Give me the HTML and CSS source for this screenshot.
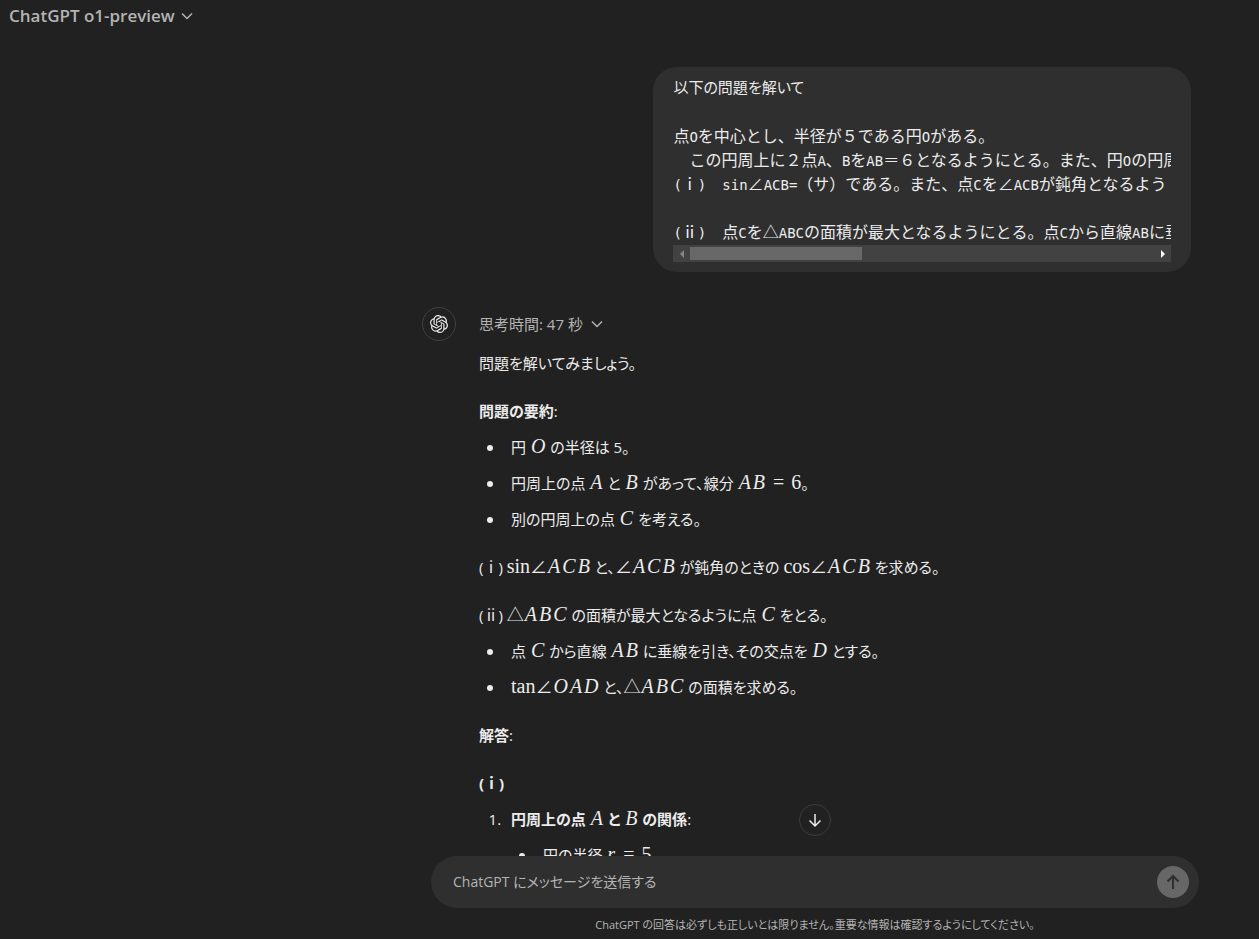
FILE: index.html
```
<!DOCTYPE html>
<html lang="ja">
<head>
    <meta charset="UTF-8">
    <meta name="viewport" content="width=device-width, initial-scale=1.0">
    <title>ChatGPT</title>
    <link rel="stylesheet" href="styles.css">
</head>
<body>

    <!-- Header -->
    <header class="header">
        <button class="model-btn" type="button">
            ChatGPT o1-preview
            <svg class="chevron" viewBox="0 0 12 12"><path d="M1 3.5l5 5 5-5"/></svg>
        </button>
    </header>

    <!-- Conversation -->
    <main class="thread">
        <div class="messages">

            <div class="bubble">
                <div class="bubble-scroll">
                    <p class="plain">以下の問題を解いて</p>
                    <p>&nbsp;</p>
                    <p>点<code>O</code>を中心とし、半径が５である円<code>O</code>がある。</p>
                    <p>　この円周上に２点<code>A</code>、<code>B</code>を<code>AB</code>＝６となるようにとる。また、円<code>O</code>の円周</p>
                    <p><code>(</code>ⅰ<code>)</code>　<code>sin</code>∠<code>ACB=</code>（サ）である。また、点<code>C</code>を∠<code>ACB</code>が鈍角となるよう</p>
                    <p>&nbsp;</p>
                    <p><code>(</code>ⅱ<code>)</code>　点<code>C</code>を△<code>ABC</code>の面積が最大となるようにとる。点<code>C</code>から直線<code>AB</code>に垂</p>
                </div>
                <div class="scrollbar">
                    <span class="arrow arrow-left"></span>
                    <span class="track"><span class="thumb"></span></span>
                    <span class="arrow arrow-right"></span>
                </div>
            </div>

            <div class="answer">
                <div class="avatar">
                    <svg viewBox="0 0 24 24"><path d="M22.2819 9.8211a5.9847 5.9847 0 0 0-.5157-4.9108 6.0462 6.0462 0 0 0-6.5098-2.9A6.0651 6.0651 0 0 0 4.9807 4.1818a5.9847 5.9847 0 0 0-3.9977 2.9 6.0462 6.0462 0 0 0 .7427 7.0966 5.98 5.98 0 0 0 .511 4.9107 6.051 6.051 0 0 0 6.5146 2.9001A5.9847 5.9847 0 0 0 13.2599 24a6.0557 6.0557 0 0 0 5.7718-4.2058 5.9894 5.9894 0 0 0 3.9977-2.9001 6.0557 6.0557 0 0 0-.7475-7.0729zm-9.022 12.6081a4.4755 4.4755 0 0 1-2.8764-1.0408l.1419-.0804 4.7783-2.7582a.7948.7948 0 0 0 .3927-.6813v-6.7369l2.02 1.1686a.071.071 0 0 1 .038.052v5.5826a4.504 4.504 0 0 1-4.4945 4.4944zm-9.6607-4.1254a4.4708 4.4708 0 0 1-.5346-3.0137l.142.0852 4.783 2.7582a.7712.7712 0 0 0 .7806 0l5.8428-3.3685v2.3324a.0804.0804 0 0 1-.0332.0615L9.74 19.9502a4.4992 4.4992 0 0 1-6.1408-1.6464zM2.3408 7.8956a4.485 4.485 0 0 1 2.3655-1.9728V11.6a.7664.7664 0 0 0 .3879.6765l5.8144 3.3543-2.0201 1.1685a.0757.0757 0 0 1-.071 0l-4.8303-2.7865A4.504 4.504 0 0 1 2.3408 7.872zm16.5963 3.8558L13.1038 8.364 15.1192 7.2a.0757.0757 0 0 1 .071 0l4.8303 2.7913a4.4944 4.4944 0 0 1-.6765 8.1042v-5.6772a.79.79 0 0 0-.407-.667zm2.0107-3.0231l-.142-.0852-4.7735-2.7818a.7759.7759 0 0 0-.7854 0L9.409 9.2297V6.8974a.0662.0662 0 0 1 .0284-.0615l4.8303-2.7866a4.4992 4.4992 0 0 1 6.6802 4.66zM8.3065 12.863l-2.02-1.1638a.0804.0804 0 0 1-.038-.0567V6.0742a4.4992 4.4992 0 0 1 7.3757-3.4537l-.142.0805L8.704 5.459a.7948.7948 0 0 0-.3927.6813zm1.0976-2.3654l2.602-1.4998 2.6069 1.4998v2.9994l-2.5974 1.4997-2.6067-1.4997Z"/></svg>
                </div>

                <div class="content">
                    <button class="thought-btn" type="button">
                        思考時間: 47 秒
                        <svg class="chevron" viewBox="0 0 12 12"><path d="M1 3.5l5 5 5-5"/></svg>
                    </button>

                    <p>問題を解いてみましょう。</p>

                    <p class="lead"><strong>問題の要約</strong>:</p>
                    <ul>
                        <li>円 <span class="math"><i>O</i></span> の半径は 5。</li>
                        <li>円周上の点 <span class="math"><i>A</i></span> と <span class="math"><i>B</i></span> があって、線分 <span class="math"><i>A</i><i>B</i><span class="rel">=</span>6</span>。</li>
                        <li>別の円周上の点 <span class="math"><i>C</i></span> を考える。</li>
                    </ul>

                    <p>(ⅰ) <span class="math">sin<b>∠</b><i>A</i><i>C</i><i>B</i></span> と、<span class="math"><b>∠</b><i>A</i><i>C</i><i>B</i></span> が鈍角のときの <span class="math">cos<b>∠</b><i>A</i><i>C</i><i>B</i></span> を求める。</p>

                    <p class="lead">(ⅱ) <span class="math"><b>△</b><i>A</i><i>B</i><i>C</i></span> の面積が最大となるように点 <span class="math"><i>C</i></span> をとる。</p>
                    <ul>
                        <li>点 <span class="math"><i>C</i></span> から直線 <span class="math"><i>A</i><i>B</i></span> に垂線を引き、その交点を <span class="math"><i>D</i></span> とする。</li>
                        <li><span class="math">tan<b>∠</b><i>O</i><i>A</i><i>D</i></span> と、<span class="math"><b>△</b><i>A</i><i>B</i><i>C</i></span> の面積を求める。</li>
                    </ul>

                    <p><strong>解答</strong>:</p>

                    <p class="lead"><strong>(ⅰ)</strong></p>
                    <ol>
                        <li>
                            <strong>円周上の点 <span class="math"><i>A</i></span> と <span class="math"><i>B</i></span> の関係</strong>:
                            <ul>
                                <li>円の半径 <span class="math"><i>r</i><span class="rel">=</span>5</span></li>
                            </ul>
                        </li>
                    </ol>
                </div>
            </div>
        </div>
    </main>

    <!-- Message box -->
    <footer class="footer">
        <button class="down-btn" type="button" aria-label="一番下へ">
            <svg viewBox="0 0 16 16"><path d="M8 2v12M2.500 8.500L8 14l5.500-5.500"/></svg>
        </button>
        <form class="composer">
            <input type="text" aria-label="メッセージ" placeholder="ChatGPT にメッセージを送信する">
            <button class="send-btn" type="button" aria-label="送信">
                <svg viewBox="0 0 16 16"><path d="M8 15V2M2.500 7.500L8 2l5.500 5.500"/></svg>
            </button>
        </form>
        <p class="note">ChatGPT の回答は必ずしも正しいとは限りません。重要な情報は確認するようにしてください。</p>
    </footer>

</body>
</html>
```
FILE: styles.css
```
* {
    box-sizing: border-box;
}

body {
    margin: 0;
    height: 100vh;
    display: flex;
    flex-direction: column;
    background: #212121;
    color: #ececec;
    font-family: "Open Sans", "Noto Sans CJK JP", sans-serif;
    font-size: 15px;
    line-height: 28px;
    font-feature-settings: "palt";
}

p, ul, ol {
    margin: 0;
    padding: 0;
}

button, input {
    border: none;
    padding: 0;
    background: none;
    font: inherit;
    font-feature-settings: inherit;
}

button {
    cursor: pointer;
}

.chevron {
    width: 12px;
    height: 12px;
    fill: none;
    stroke: currentColor;
    stroke-width: 1.5;
}

/* Header */
.header {
    flex: none;
    height: 32px;
    padding-left: 9px;
    display: flex;
    align-items: center;
}

.model-btn {
    display: flex;
    align-items: center;
    gap: 6px;
    color: #b4b4b4;
    font-size: 17px;
    font-weight: 600;
}

/* Conversation */
.thread {
    flex: 1;
    min-height: 0;
    overflow: hidden;
    padding: 35px 68px 0 16px;
}

.messages {
    max-width: 768px;
    margin-left: auto;
    display: flex;
    flex-direction: column;
    gap: 35px;
}

.bubble {
    align-self: flex-end;
    width: 70%;
    padding: 8px 20px 10px;
    border-radius: 24px;
    background: #2f2f2f;
    font-size: 16px;
    line-height: 24px;
    font-feature-settings: normal;
}

.bubble-scroll {
    overflow: hidden;
    padding-bottom: 2px;
    white-space: nowrap;
    font-family: "Noto Sans CJK JP", sans-serif;
}

.bubble-scroll p {
    height: 24px;
}

.bubble-scroll .plain {
    font-size: 15px;
    font-feature-settings: "palt";
}

.bubble-scroll code {
    font-family: "DejaVu Sans Mono", monospace;
    font-size: 14px;
    line-height: 1;
}

.scrollbar {
    display: flex;
    align-items: center;
    height: 17px;
    background: #424242;
}

.arrow {
    width: 17px;
    display: flex;
    justify-content: center;
}

.arrow::before {
    content: "";
    border: 4px solid transparent;
}

.arrow-left::before {
    border-left: none;
    border-right-color: #868686;
}

.arrow-right::before {
    border-right: none;
    border-left-color: #fff;
}

.track {
    flex: 1;
}

.thumb {
    display: block;
    width: 37%;
    height: 13px;
    background: #686868;
}

.answer {
    display: flex;
    gap: 23px;
}

.avatar {
    flex: none;
    width: 34px;
    height: 34px;
    margin-left: -1px;
    border: 1px solid #424242;
    border-radius: 50%;
    display: flex;
    align-items: center;
    justify-content: center;
}

.avatar svg {
    width: 18px;
    height: 18px;
    fill: #ececec;
}

.content {
    flex: 1;
    white-space: nowrap;
}

.thought-btn {
    display: flex;
    align-items: center;
    gap: 8px;
    height: 34px;
    margin-bottom: 8px;
    color: #b4b4b4;
}

.content > p,
.content > ul {
    margin-bottom: 20px;
}

.content > .lead {
    margin-bottom: 8px;
}

.content ul {
    padding-left: 32px;
    list-style: none;
}

.content ol {
    padding-left: 26px;
}

.content li {
    margin-bottom: 8px;
}

.content ol > li {
    padding-left: 6px;
}

.content ul > li {
    padding-left: 0;
}

.content ul > li::before {
    content: "";
    display: inline-block;
    width: 6px;
    height: 6px;
    margin: 0 18px 0 -24px;
    border-radius: 50%;
    background: #ececec;
    vertical-align: 2px;
}

.content ol ul {
    margin-top: 8px;
}

.math {
    font-family: "Liberation Serif", serif;
    font-size: 20px;
    font-weight: 400;
    line-height: 1;
}

.math i {
    padding: 0 1px;
}

.math .rel {
    padding: 0 7px;
}

/* angle and triangle signs */
.math b {
    font-family: "Noto Sans CJK JP", sans-serif;
    font-size: 17px;
    font-weight: 400;
    line-height: 1;
    font-feature-settings: normal;
}

/* Message box */
.footer {
    flex: none;
    position: relative;
    padding: 0 60px 0 16px;
}

.composer {
    max-width: 768px;
    height: 52px;
    margin-left: auto;
    padding: 0 10px 0 22px;
    border-radius: 26px;
    background: #2f2f2f;
    display: flex;
    align-items: center;
}

.composer input {
    flex: 1;
    min-width: 0;
    color: #ececec;
    font-size: 14px;
    outline: none;
}

.composer input::placeholder {
    color: #b4b4b4;
}

.send-btn {
    width: 32px;
    height: 32px;
    border-radius: 50%;
    background: #676767;
    color: #2f2f2f;
    display: flex;
    align-items: center;
    justify-content: center;
}

.send-btn svg,
.down-btn svg {
    width: 16px;
    height: 16px;
    fill: none;
    stroke: currentColor;
    stroke-width: 2;
}

.down-btn {
    position: absolute;
    right: 428px;
    top: -52px;
    width: 32px;
    height: 32px;
    border: 1px solid #3d3d3d;
    border-radius: 50%;
    background: #212121;
    color: #ececec;
    display: flex;
    align-items: center;
    justify-content: center;
}

.down-btn svg {
    stroke-width: 1.5;
}

.note {
    max-width: 768px;
    margin-left: auto;
    padding: 9px 0 6px;
    color: #b4b4b4;
    font-size: 11px;
    line-height: 16px;
    text-align: center;
}
```
